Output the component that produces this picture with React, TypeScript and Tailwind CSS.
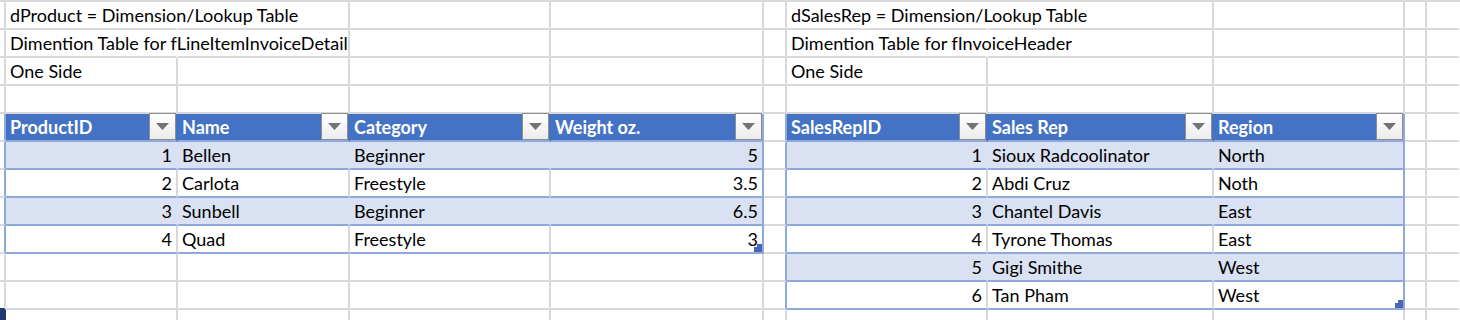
import React from "react";

type Cell = {
  t?: string;
  k: string;
  r?: boolean;
  dd?: boolean;
  h?: boolean;
};

const BASE =
  "relative h-[28px] flex items-center whitespace-nowrap leading-[26px] border-r-2 border-b-2";
const GRID = "border-r-[#D9D9D9] border-b-[#D9D9D9]";
const OVER = "border-r-transparent border-b-[#D9D9D9]";
const LASTCOL = "border-r-transparent border-b-[#D9D9D9]";
const EDGE = "border-r-[#8EA9DB] border-b-[#D9D9D9]";
const NAVYTOP = "border-r-[#D9D9D9] border-b-[#1F3870]";
const NAVY = "bg-[#1F3870] border-r-[#1F3870] border-b-[#1F3870]";
const HEAD = "bg-[#4472C4] text-white font-bold border-r-[#4472C4] border-b-[#8EA9DB]";
const HEADL = "bg-[#4472C4] text-white font-bold border-r-[#8EA9DB] border-b-[#8EA9DB]";
const BAND = "bg-[#D9E1F2] border-r-[#D9E1F2] border-b-[#8EA9DB]";
const BANDL = "bg-[#D9E1F2] border-r-[#8EA9DB] border-b-[#8EA9DB]";
const WHITE = "bg-white border-r-[#D9D9D9] border-b-[#8EA9DB]";
const WHITEL = "bg-white border-r-[#8EA9DB] border-b-[#8EA9DB]";

const LEFT_PAD = "pl-[4px]";
const RIGHT_PAD = "justify-end pr-[4px]";

const g = (t?: string): Cell => ({ t, k: GRID });

const leftData: [string, string, string, string][] = [
  ["1", "Bellen", "Beginner", "5"],
  ["2", "Carlota", "Freestyle", "3.5"],
  ["3", "Sunbell", "Beginner", "6.5"],
  ["4", "Quad", "Freestyle", "3"],
];

const rightData: [string, string, string][] = [
  ["1", "Sioux Radcoolinator", "North"],
  ["2", "Abdi Cruz", "Noth"],
  ["3", "Chantel Davis", "East"],
  ["4", "Tyrone Thomas", "East"],
  ["5", "Gigi Smithe", "West"],
  ["6", "Tan Pham", "West"],
];

function buildRows(): Cell[][] {
  const rows: Cell[][] = [];
  rows.push([
    g(),
    { t: "dProduct = Dimension/Lookup Table", k: OVER },
    g(),
    g(),
    g(),
    g(),
    { t: "dSalesRep = Dimension/Lookup Table", k: OVER },
    g(),
    g(),
    g(),
    { k: LASTCOL },
  ]);
  rows.push([
    g(),
    { t: "Dimention Table for fLineItemInvoiceDetail", k: OVER },
    g(),
    g(),
    g(),
    g(),
    { t: "Dimention Table for fInvoiceHeader", k: OVER },
    g(),
    g(),
    g(),
    { k: LASTCOL },
  ]);
  rows.push([g(), g("One Side"), g(), g(), g(), g(), g("One Side"), g(), g(), g(), { k: LASTCOL }]);
  rows.push([g(), g(), g(), g(), g(), g(), g(), g(), g(), g(), { k: LASTCOL }]);
  rows.push([
    { k: EDGE },
    { t: "ProductID", k: HEAD, dd: true },
    { t: "Name", k: HEAD, dd: true },
    { t: "Category", k: HEAD, dd: true },
    { t: "Weight oz.", k: HEADL, dd: true },
    { k: EDGE },
    { t: "SalesRepID", k: HEAD, dd: true },
    { t: "Sales Rep", k: HEAD, dd: true },
    { t: "Region", k: HEADL, dd: true },
    g(),
    { k: LASTCOL },
  ]);
  for (let i = 0; i < 6; i++) {
    const band = i % 2 === 0;
    const K = band ? BAND : WHITE;
    const KL = band ? BANDL : WHITEL;
    const row: Cell[] = [];
    const l = leftData[i];
    if (l) {
      row.push({ k: EDGE });
      row.push({ t: l[0], k: K, r: true });
      row.push({ t: l[1], k: K });
      row.push({ t: l[2], k: K });
      row.push({ t: l[3], k: KL, r: true, h: i === leftData.length - 1 });
    } else {
      row.push(i === 5 ? { k: NAVYTOP } : g(), g(), g(), g(), g());
    }
    const rr = rightData[i];
    row.push({ k: EDGE });
    row.push({ t: rr[0], k: K, r: true });
    row.push({ t: rr[1], k: K });
    row.push({ t: rr[2], k: KL, h: i === rightData.length - 1 });
    row.push(g());
    row.push({ k: LASTCOL });
    rows.push(row);
  }
  rows.push([{ k: NAVY }, g(), g(), g(), g(), g(), g(), g(), g(), g(), { k: LASTCOL }]);
  return rows;
}

function Dropdown() {
  return (
    <div className="absolute right-0 top-[-1px] w-[27px] h-[27px] border border-[#8E8E8E] bg-gradient-to-b from-white to-[#ECECEC] flex items-center justify-center">
      <svg width="13" height="7" viewBox="0 0 13 7">
        <polygon points="0,0 13,0 6.5,7" fill="#737373" />
      </svg>
    </div>
  );
}

function Handle() {
  return (
    <svg className="absolute right-0 bottom-0" width="8" height="8" viewBox="0 0 8 8">
      <polygon points="3,0 8,0 8,8 0,8 0,3 3,3" fill="#4A66B8" />
    </svg>
  );
}

export default function App() {
  const rows = buildRows();
  return (
    <div className="w-[1460px] h-[320px] overflow-hidden bg-white text-black text-[18px] font-['Lato',sans-serif]">
      <div className="h-[2px] bg-[#D9D9D9]" />
      <div className="grid grid-cols-[6px_172px_172px_201px_213px_23px_201px_226px_191px_22px_33px]">
        {rows.map((row, ri) =>
          row.map((c, ci) => (
            <div
              key={`${ri}-${ci}`}
              className={`${BASE} ${c.k} ${c.r ? RIGHT_PAD : LEFT_PAD}`}
            >
              {c.t ? <span className="relative z-10">{c.t}</span> : null}
              {c.dd ? <Dropdown /> : null}
              {c.h ? <Handle /> : null}
            </div>
          ))
        )}
      </div>
    </div>
  );
}
